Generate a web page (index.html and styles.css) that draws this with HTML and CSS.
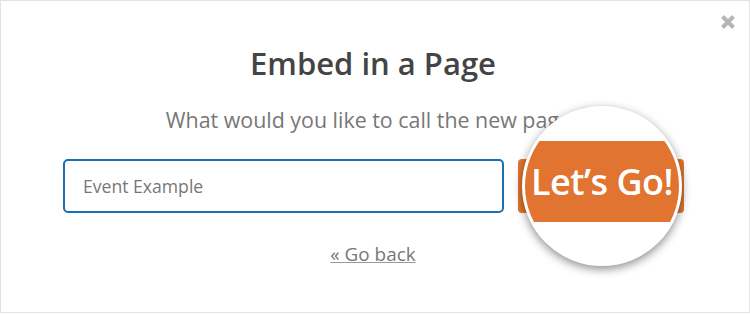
FILE: index.html
```html
<!DOCTYPE html>
<html>
<head>
<meta charset="utf-8">
<link rel="stylesheet" href="styles.css">
</head>
<body>
<div class="modal">
  <button class="close" aria-label="Close">
    <svg width="16" height="16" viewBox="0 0 16 16"><path d="M2.5 2.5 L13.5 13.5 M13.5 2.5 L2.5 13.5" stroke="#b5b5b5" stroke-width="4" stroke-linecap="butt"/></svg>
  </button>
  <h1 class="title">Embed in a Page</h1>
  <p class="subtitle">What would you like to call the new page?</p>
  <div class="row">
    <input class="field" type="text" placeholder="Event Example">
    <button class="go">Let’s Go!</button>
    <div class="magnifier">
      <div class="mag-band">Let’s Go!</div>
    </div>
  </div>
  <a class="back" href="#">« Go back</a>
</div>
</body>
</html>
```
FILE: styles.css
```css
html, body {
  margin: 0;
  padding: 0;
  background: #fff;
}
.modal {
  position: relative;
  box-sizing: border-box;
  width: 750px;
  height: 313px;
  border: 1px solid #e3e3e3;
  padding-right: 4px;
  font-family: "Open Sans", "Noto Sans", sans-serif;
  display: flex;
  flex-direction: column;
  align-items: center;
}
.close {
  position: absolute;
  top: 13px;
  right: 13px;
  border: 0;
  padding: 0;
  background: none;
  width: 16px;
  height: 16px;
}
.close svg { display: block; }
.title {
  margin: 40px 0 0;
  font-size: 31px;
  line-height: 44px;
  font-weight: 600;
  color: #444;
}
.subtitle {
  margin: 21px 0 0;
  font-size: 21.4px;
  line-height: 28px;
  color: #777;
}
.row {
  position: relative;
  align-self: stretch;
  display: flex;
  gap: 14px;
  padding-left: 62px;
  margin-top: 25px;
}
.field {
  box-sizing: border-box;
  width: 441px;
  height: 54px;
  border: 2px solid #1c6fae;
  border-radius: 5px;
  padding: 0 18px;
  font-family: inherit;
  font-size: 17.6px;
  color: #444;
  outline: none;
}
.field::placeholder { color: #777; }
.go {
  box-sizing: border-box;
  width: 166px;
  height: 54px;
  border: 0;
  border-radius: 4px;
  background: #e27730;
  color: #fff;
  font-family: inherit;
  font-size: 18px;
  font-weight: 700;
}
.magnifier {
  position: absolute;
  left: 521px;
  top: -53px;
  width: 160px;
  height: 160px;
  box-sizing: border-box;
  border: 3px solid #fff;
  border-radius: 50%;
  background: #fff;
  overflow: hidden;
  box-shadow: 0 3px 10px rgba(0,0,0,0.45);
  display: flex;
  align-items: flex-start;
}
.mag-band {
  width: 100%;
  height: 81px;
  margin-top: 32px;
  background: #e07430;
  color: #fff;
  font-weight: 600;
  font-size: 36px;
  line-height: 81px;
  text-align: center;
  letter-spacing: -0.5px;
}
.back {
  margin-top: 28px;
  font-size: 18.9px;
  color: #777;
  text-decoration: underline;
  text-decoration-color: #999;
}
```
